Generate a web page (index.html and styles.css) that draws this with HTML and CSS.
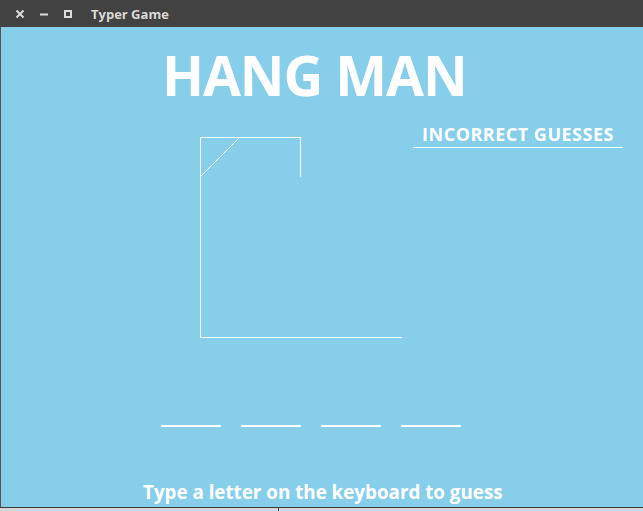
FILE: index.html
```html
<!DOCTYPE html>
<html>
<head>
<meta charset="utf-8">
<title>Typer Game</title>
<link rel="stylesheet" href="styles.css">
</head>
<body>
<div class="window">
  <div class="titlebar">
    <span class="ctl">
      <svg width="10" height="10" viewBox="0 0 10 10"><path d="M1.5 1.5 L8.5 8.5 M8.5 1.5 L1.5 8.5" stroke="#dcdcdc" stroke-width="2"/></svg>
    </span>
    <span class="ctl">
      <svg width="10" height="10" viewBox="0 0 10 10"><path d="M1 5.5 H9" stroke="#dcdcdc" stroke-width="2"/></svg>
    </span>
    <span class="ctl">
      <svg width="10" height="10" viewBox="0 0 10 10"><rect x="2" y="2" width="6" height="6" fill="none" stroke="#dcdcdc" stroke-width="2"/></svg>
    </span>
    <span class="wtitle">Typer Game</span>
  </div>
  <div class="stage">
    <h1 class="heading">HANG MAN</h1>
    <div class="board">
      <svg class="gallows" width="203" height="202" viewBox="0 0 203 202">
        <g stroke="#ffffff" stroke-width="1" fill="none" shape-rendering="crispEdges">
          <path d="M0.5 0 V201"/>
          <path d="M0 0.5 H101"/>
          <path d="M100.5 0 V40"/>
          <path d="M0 200.5 H202"/>
        </g>
        <path d="M39.5 0.5 L0.5 39.5" stroke="#ffffff" stroke-width="1"/>
      </svg>
      <div class="guesses">
        <div class="guesses-title">INCORRECT GUESSES</div>
      </div>
    </div>
    <div class="blanks">
      <span class="blank"></span>
      <span class="blank"></span>
      <span class="blank"></span>
      <span class="blank"></span>
    </div>
    <p class="hint">Type a letter on the keyboard to guess</p>
  </div>
  <div class="footer"><span class="divider"></span></div>
</div>
</body>
</html>
```
FILE: styles.css
```css
html, body {
  margin: 0;
  padding: 0;
  background: #87ceeb;
}
.window {
  width: 643px;
  height: 511px;
  display: flex;
  flex-direction: column;
  overflow: hidden;
  background: #87ceeb;
}
.titlebar {
  height: 27px;
  flex: none;
  background: #424242;
  display: flex;
  align-items: center;
  padding-left: 15px;
  box-sizing: border-box;
}
.ctl {
  width: 10px;
  height: 10px;
  display: flex;
  margin-right: 14px;
}
.ctl svg { display: block; }
.wtitle {
  margin-left: 4px;
  font-family: "Open Sans", "DejaVu Sans", sans-serif;
  font-weight: 700;
  font-size: 13px;
  color: #d9d9d9;
}
.stage {
  flex: 1;
  display: flex;
  flex-direction: column;
  border-left: 1px solid #555;
  box-sizing: border-box;
  color: #ffffff;
  font-family: "Open Sans", "DejaVu Sans", sans-serif;
  font-weight: 700;
}
.heading {
  margin: 20px 0 0 161px;
  font-size: 55px;
  line-height: 56px;
  font-weight: 700;
  letter-spacing: -1.1px;
}
.board {
  display: flex;
  align-items: flex-start;
  margin-top: 34px;
}
.gallows {
  display: block;
  margin-left: 199px;
}
.guesses {
  margin-left: 10px;
  width: 210px;
  margin-top: -15px;
}
.guesses-title {
  font-size: 18px;
  line-height: 24px;
  letter-spacing: 0.5px;
  text-align: center;
  border-bottom: 1px solid #ffffff;
  padding-bottom: 1px;
}
.blanks {
  display: flex;
  gap: 20px;
  margin: 86px 0 0 160px;
}
.blank {
  width: 60px;
  height: 2px;
  background: #ffffff;
}
.hint {
  margin: 54px 0 0 142px;
  font-size: 18.8px;
  line-height: 22px;
}
.footer {
  height: 3px;
  flex: none;
  background: #d6d6d6;
  border-top: 1px solid #3a3a3a;
  position: relative;
}
.divider {
  position: absolute;
  left: 278px;
  top: 0;
  width: 1px;
  height: 3px;
  background: #444;
}
```
